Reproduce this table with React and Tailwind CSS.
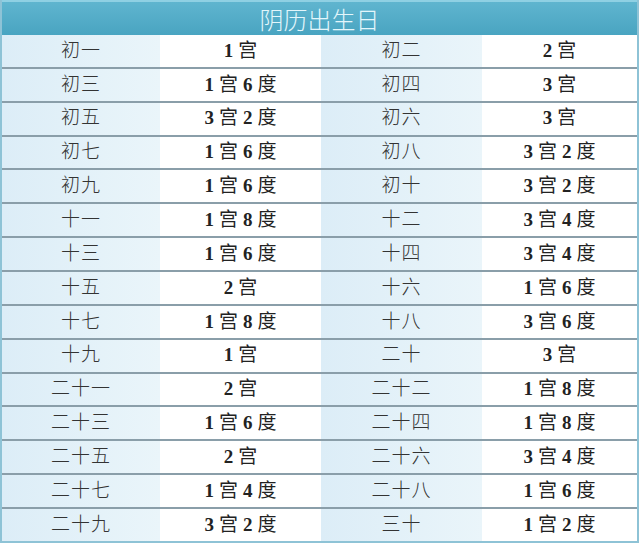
const ROWS = [
  ['初一', '1 宫', '初二', '2 宫'],
  ['初三', '1 宫 6 度', '初四', '3 宫'],
  ['初五', '3 宫 2 度', '初六', '3 宫'],
  ['初七', '1 宫 6 度', '初八', '3 宫 2 度'],
  ['初九', '1 宫 6 度', '初十', '3 宫 2 度'],
  ['十一', '1 宫 8 度', '十二', '3 宫 4 度'],
  ['十三', '1 宫 6 度', '十四', '3 宫 4 度'],
  ['十五', '2 宫', '十六', '1 宫 6 度'],
  ['十七', '1 宫 8 度', '十八', '3 宫 6 度'],
  ['十九', '1 宫', '二十', '3 宫'],
  ['二十一', '2 宫', '二十二', '1 宫 8 度'],
  ['二十三', '1 宫 6 度', '二十四', '1 宫 8 度'],
  ['二十五', '2 宫', '二十六', '3 宫 4 度'],
  ['二十七', '1 宫 4 度', '二十八', '1 宫 6 度'],
  ['二十九', '3 宫 2 度', '三十', '1 宫 2 度'],
];

function DayCell({ children }) {
  return (
    <div className="flex items-center justify-center bg-gradient-to-r from-[#dcedf7] to-[#eaf5fa] text-[19px] font-light text-[#333] tracking-[1px]">
      {children}
    </div>
  );
}

function ValueCell({ children }) {
  // digits are set bold, the 宫 / 度 characters stay regular
  const parts = children.split(' ');
  return (
    <div className="flex items-center justify-center gap-[5px] bg-white text-[19px] text-[#222]">
      {parts.map((p, i) =>
        /\d/.test(p) ? (
          <span key={i} className="font-bold">{p}</span>
        ) : (
          <span key={i} className="font-normal">{p}</span>
        )
      )}
    </div>
  );
}

export default function App() {
  return (
    <div
      className="w-[639px] h-[543px] flex flex-col bg-white border-x-2 border-b-2 border-[#8ec3d6]"
      style={{ fontFamily: '"Liberation Serif", "Noto Sans CJK SC", serif' }}
    >
      <div
        className="h-[35px] shrink-0 flex items-center justify-center bg-gradient-to-b from-[#5fb5cf] to-[#49a4c1] border-t-2 border-[#8fd0e3] text-[24px] font-light text-[#e3f6fb]"
        style={{ fontFamily: '"Noto Sans CJK SC", sans-serif' }}
      >
        阴历出生日
      </div>
      <div className="flex-1 flex flex-col">
        {ROWS.map((row, i) => (
          <div
            key={i}
            className={`flex-1 grid grid-cols-[158px_161px_161px_1fr] ${i > 0 ? 'border-t-2 border-[#8a9ea9]' : ''}`}
          >
            <DayCell>{row[0]}</DayCell>
            <ValueCell>{row[1]}</ValueCell>
            <DayCell>{row[2]}</DayCell>
            <ValueCell>{row[3]}</ValueCell>
          </div>
        ))}
      </div>
    </div>
  );
}
